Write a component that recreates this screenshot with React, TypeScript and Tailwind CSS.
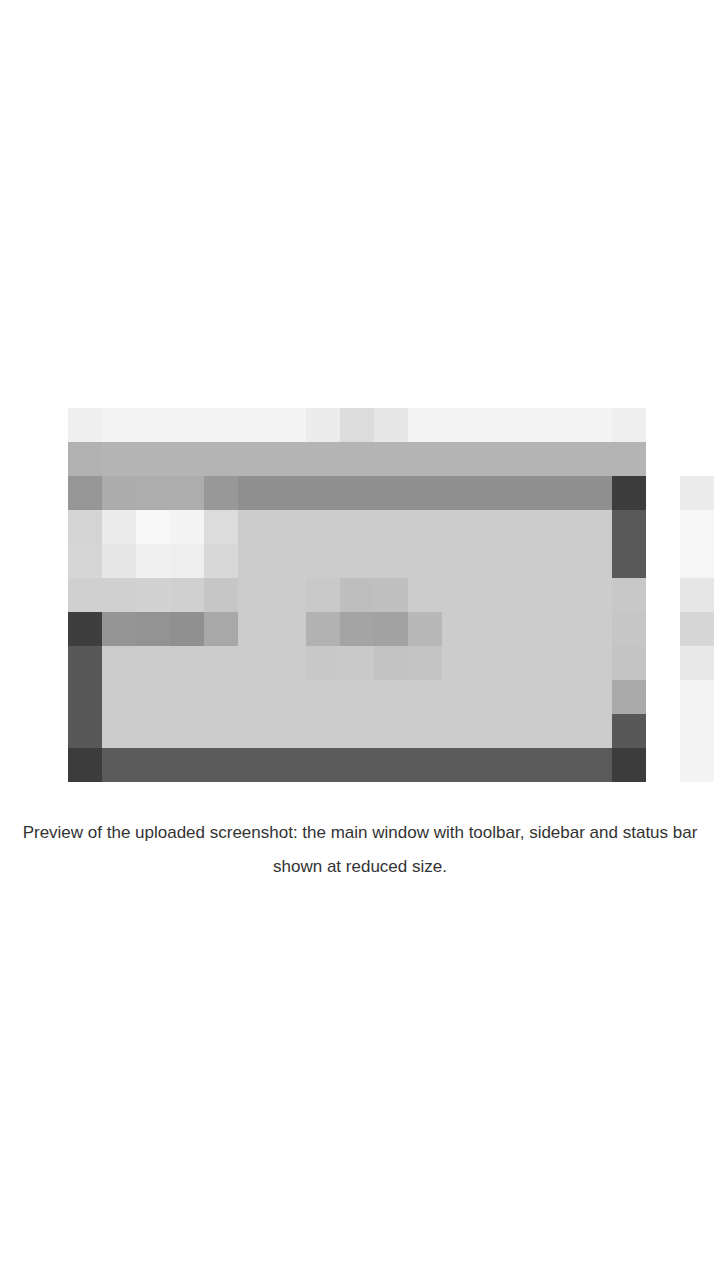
const CARD: string[][] = [
  ["ef", "f4", "f4", "f4", "f4", "f4", "f4", "ec", "dc", "e6", "f4", "f4", "f4", "f4", "f4", "f4", "ef"],
  ["b2", "b4", "b4", "b4", "b4", "b4", "b4", "b4", "b4", "b4", "b4", "b4", "b4", "b4", "b4", "b4", "b4"],
  ["96", "ac", "ad", "ad", "98", "8f", "8f", "8f", "8f", "8f", "8f", "8f", "8f", "8f", "8f", "8f", "3c"],
  ["d4", "eb", "f8", "f4", "dc", "cc", "cc", "cc", "cc", "cc", "cc", "cc", "cc", "cc", "cc", "cc", "59"],
  ["d6", "e6", "f0", "ee", "d8", "cc", "cc", "cc", "cc", "cc", "cc", "cc", "cc", "cc", "cc", "cc", "59"],
  ["d0", "d0", "d2", "d0", "c6", "cc", "cc", "c9", "be", "c0", "cc", "cc", "cc", "cc", "cc", "cc", "c8"],
  ["3e", "95", "93", "90", "a8", "cc", "cc", "b2", "a4", "a2", "b8", "cc", "cc", "cc", "cc", "cc", "c6"],
  ["58", "cc", "cc", "cc", "cc", "cc", "cc", "c8", "c9", "c2", "c4", "cc", "cc", "cc", "cc", "cc", "c4"],
  ["58", "cc", "cc", "cc", "cc", "cc", "cc", "cc", "cc", "cc", "cc", "cc", "cc", "cc", "cc", "cc", "aa"],
  ["58", "cc", "cc", "cc", "cc", "cc", "cc", "cc", "cc", "cc", "cc", "cc", "cc", "cc", "cc", "cc", "58"],
  ["3c", "5a", "5a", "5a", "5a", "5a", "5a", "5a", "5a", "5a", "5a", "5a", "5a", "5a", "5a", "5a", "3c"],
];

const PEEK = ["ec", "f6", "f6", "e6", "d6", "e8", "f4", "f4", "f4"];

/** Low-resolution preview thumbnail, drawn cell by cell. */
function Thumb({ cells, cell = 34 }: { cells: string[][]; cell?: number }) {
  const rows = cells.length;
  const cols = cells[0].length;
  return (
    <svg
      width={cols * cell}
      height={rows * cell}
      viewBox={`0 0 ${cols} ${rows}`}
      shapeRendering="crispEdges"
      className="block shrink-0"
    >
      {cells.map((row, y) =>
        row.map((v, x) => (
          <rect key={`${x}-${y}`} x={x} y={y} width={1} height={1} fill={`#${v}${v}${v}`} />
        )),
      )}
    </svg>
  );
}

export default function App() {
  return (
    <div className="min-h-screen bg-white pt-[408px] font-['Liberation_Sans',Arial,sans-serif] text-[#333]">
      <div className="flex items-start gap-[34px] pl-[68px]">
        <Thumb cells={CARD} />
        <div className="mt-[68px]">
          <Thumb cells={PEEK.map((v) => [v])} />
        </div>
      </div>
      <p className="mt-[34px] text-center text-[17px] leading-[34px]">
        <span className="block whitespace-nowrap">
          Preview of the uploaded screenshot: the main window with toolbar, sidebar and status bar
        </span>
        <span className="block">shown at reduced size.</span>
      </p>
    </div>
  );
}
